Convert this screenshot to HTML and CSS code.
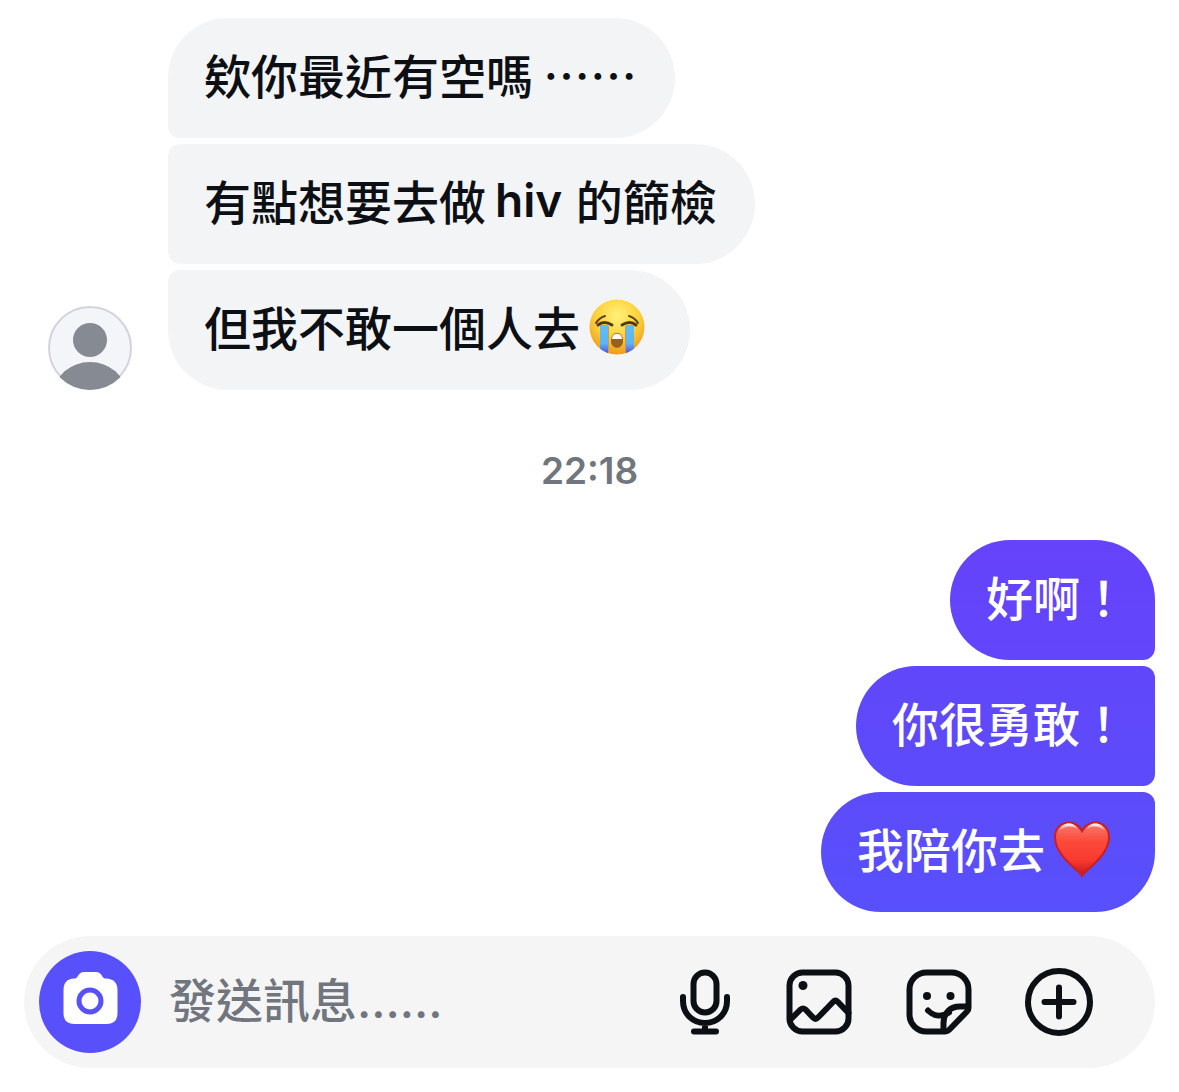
FILE: index.html
```html
<!DOCTYPE html>
<html lang="zh-Hant">
<head>
<meta charset="utf-8">
<meta name="viewport" content="width=device-width, initial-scale=1">
<title>聊天</title>
<link rel="stylesheet" href="styles.css">
</head>
<body>
<main class="chat">
  <section class="incoming">
    <svg class="avatar" viewBox="0 0 84 84" role="img" aria-label="大頭貼">
      <defs><clipPath id="face"><circle cx="42" cy="42" r="42"/></clipPath></defs>
      <circle cx="42" cy="42" r="41" fill="#f4f5f8" stroke="#d4d2de" stroke-width="2"/>
      <g clip-path="url(#face)" fill="#858a93">
        <circle cx="42" cy="34" r="17"/>
        <ellipse cx="42" cy="88" rx="36" ry="32"/>
      </g>
    </svg>
    <div class="stack">
      <p class="bubble">欸你最近有空嗎<span class="dots">……</span></p>
      <p class="bubble">有點想要去做<span class="latin">hiv </span>的篩檢</p>
      <p class="bubble">但我不敢一個人去<svg class="emoji" viewBox="0 0 58 58" role="img" aria-label="大哭">
        <defs>
          <radialGradient id="skin" cx="50%" cy="30%" r="70%"><stop offset="0" stop-color="#fff27a"/><stop offset=".55" stop-color="#fdd23c"/><stop offset="1" stop-color="#ee9a1c"/></radialGradient>
          <linearGradient id="tear" x1="0" y1="0" x2="0" y2="1"><stop offset="0" stop-color="#62bdf5"/><stop offset=".6" stop-color="#5cb4f2"/><stop offset=".9" stop-color="#5a4fe0"/></linearGradient>
          <clipPath id="head"><circle cx="29" cy="29" r="27.500"/></clipPath>
        </defs>
        <circle cx="29" cy="29" r="27.500" fill="url(#skin)"/>
        <g clip-path="url(#head)">
          <path d="M12 27H20V58H12ZM38 27H46V58H38Z" fill="url(#tear)"/>
          <path d="M20.500 28V56M37.500 28V56" stroke="#c79a55" stroke-width="1"/>
        </g>
        <path d="M10 27Q16 22 24 27M34 27Q42 22 48 27" fill="none" stroke="#55371f" stroke-width="3" stroke-linecap="round"/>
        <path d="M8 25Q11 20 17 18M41 18Q47 20 50 25" fill="none" stroke="#63401d" stroke-width="2" stroke-linecap="round"/>
        <path d="M23 43C23 32 35 32 35 43C35 52 23 52 23 43Z" fill="#95611b"/>
        <path d="M24 41C24 34 34 34 34 41Z" fill="#fff"/>
      </svg></p>
    </div>
  </section>

  <time class="stamp" datetime="22:18">22:18</time>

  <section class="stack outgoing">
    <p class="bubble exclaim">好啊！</p>
    <p class="bubble exclaim">你很勇敢！</p>
    <p class="bubble">我陪你去<svg class="emoji" viewBox="0 0 58 58" role="img" aria-label="愛心">
      <defs>
        <linearGradient id="heart" x1="0" y1="0" x2="0" y2="1"><stop offset="0" stop-color="#f57d72"/><stop offset=".35" stop-color="#fb4a3a"/><stop offset=".7" stop-color="#f93a30"/><stop offset="1" stop-color="#c3171e"/></linearGradient>
        <linearGradient id="shine" x1="0" y1="0" x2="0" y2="1"><stop offset="0" stop-color="#fff"/><stop offset="1" stop-color="#fff" stop-opacity="0"/></linearGradient>
      </defs>
      <path d="M29 56C25 49 2 36 2 17C2 1 22-3 29 11C36-3 56 1 56 17C56 36 33 49 29 56Z" fill="url(#heart)" stroke="#cb1f20" stroke-width="2"/>
      <path d="M6 11C9 1 22 2 24 9C19 5 11 6 6 11ZM34 9C37 2 49 1 52 11C47 6 39 5 34 9Z" fill="url(#shine)"/>
    </svg></p>
  </section>

  <form class="composer">
    <button class="camera" type="button" aria-label="相機">
      <svg viewBox="0 0 102 102" aria-hidden="true">
        <path d="M35 27.500C38 27.500 38 26 39.500 24Q41.500 21 45 21H57Q60.500 21 62.500 24C64 26 64 27.500 67 27.500Q78.500 28 78.500 39V62Q78.500 73 67.500 73H35.500Q24.500 73 24.500 62V39Q24.500 28 35 27.500Z" fill="#fff"/>
        <circle cx="51" cy="50" r="11" fill="none" stroke="#5851fb" stroke-width="5"/>
      </svg>
    </button>
    <input class="field" type="text" aria-label="發送訊息" placeholder="發送訊息……">
    <div class="tools">
      <button class="tool mic" type="button" aria-label="語音">
        <svg viewBox="0 0 60 72" aria-hidden="true"><rect x="18.500" y="6.500" width="23" height="40" rx="11.500"/><path d="M8 31V35C8 48 18 57 30 57S52 48 52 35V31M30 57V65M19 65.500H41"/></svg>
      </button>
      <button class="tool" type="button" aria-label="相片">
        <svg viewBox="0 0 72 72" aria-hidden="true"><rect x="6.500" y="6.500" width="59" height="59" rx="13"/><path d="M7 54L17.500 43.500Q20 41.500 22.500 43.500L30 51.500Q32.500 54 35 51.500L50 36Q52.500 33.500 55 36L65.500 47"/><circle class="dot" cx="20" cy="19.500" r="4.500"/></svg>
      </button>
      <button class="tool" type="button" aria-label="貼圖">
        <svg viewBox="0 0 72 72" aria-hidden="true"><path d="M42 65.500H23.500A17 17 0 0 1 6.500 48.500V23.500A17 17 0 0 1 23.500 6.500H48.500A17 17 0 0 1 65.500 23.500V42Q65.500 44 64 45.500L46 64Q44.500 65.500 42 65.500"/><path d="M40.500 65V57C40.500 47 47 40.500 57 40.500H65"/><path d="M25 44.500C31 50.500 39 51 46 46.500"/><circle class="dot" cx="24" cy="30" r="4"/><circle class="dot" cx="47.500" cy="30" r="4"/></svg>
      </button>
      <button class="tool" type="button" aria-label="更多">
        <svg viewBox="0 0 72 72" aria-hidden="true"><circle cx="36" cy="36" r="31"/><path d="M36 21.500V50.500M21.500 36H50.500"/></svg>
      </button>
    </div>
  </form>
</main>
</body>
</html>
```
FILE: styles.css
```css
* {
  box-sizing: border-box;
}

body {
  margin: 0;
  background: #fff;
  color: #0c1014;
  font: 500 47px/60px "Noto Sans CJK TC", sans-serif;
}

.chat {
  display: flex;
  flex-direction: column;
  padding: 18px 24px 24px;
}

.incoming {
  display: flex;
  align-items: flex-end;
  gap: 36px;
  padding-left: 24px;
}

.avatar {
  flex: none;
  width: 84px;
  height: 84px;
}

.stack {
  display: flex;
  flex-direction: column;
  align-items: flex-start;
  gap: 6px;
}

.bubble {
  display: flex;
  margin: 0;
  padding: 26px 38px 34px 36px;
  border-radius: 12px 60px 60px 12px;
  background: #f3f4f6;
}

.bubble:first-child {
  border-top-left-radius: 60px;
}

.bubble:last-child {
  border-bottom-left-radius: 60px;
}

.dots {
  margin-left: 10px;
}

.latin {
  margin: 0 2px 0 9px;
  font: 600 46px/60px Inter, sans-serif;
  white-space: pre;
}

.emoji {
  flex: none;
  width: 58px;
  height: 58px;
  margin: 2px 6px 0 8px;
}

.stamp {
  align-self: center;
  margin: 57px 0 45px;
  color: #71757e;
  font: 600 37px/48px Inter, sans-serif;
}

.outgoing {
  align-items: flex-end;
  color: #fff;
}

.outgoing .bubble {
  border-radius: 60px 12px 12px 60px;
  background: linear-gradient(#5d4bfa, #5850fc);
}

.outgoing .bubble:first-child {
  border-top-right-radius: 60px;
  background: linear-gradient(#6543fb, #6246fb);
}

.outgoing .bubble:nth-child(2) {
  background: linear-gradient(#6147fa, #5c4bfb);
}

.outgoing .bubble:last-child {
  border-bottom-right-radius: 60px;
}

.outgoing .exclaim {
  padding-right: 28px;
}

.composer {
  display: flex;
  align-items: center;
  height: 132px;
  margin-top: 24px;
  padding: 0 60px 0 15px;
  border-radius: 66px;
  background: #f5f5f6;
}

button {
  flex: none;
  padding: 0;
  border: 0;
  background: none;
}

.camera,
.camera svg {
  display: block;
  width: 102px;
  height: 102px;
}

.camera {
  border-radius: 50%;
  background: #5851fb;
}

.field {
  flex: 1;
  min-width: 0;
  height: 72px;
  margin-left: 28px;
  padding: 0 0 4px;
  border: 0;
  outline: 0;
  background: none;
  color: #0c1014;
  font: 500 47px/60px Inter, "Noto Sans CJK TC", sans-serif;
}

.field::placeholder {
  color: #71757e;
  opacity: 1;
}

.tools {
  display: flex;
  gap: 48px;
}

.tool,
.tool svg {
  display: block;
  width: 72px;
  height: 72px;
}

.tool svg {
  fill: none;
  stroke: #0c1014;
  stroke-width: 6px;
  stroke-linecap: round;
  stroke-linejoin: round;
}

.mic,
.mic svg {
  width: 60px;
}

.tool .dot {
  fill: #0c1014;
  stroke: none;
}
```
